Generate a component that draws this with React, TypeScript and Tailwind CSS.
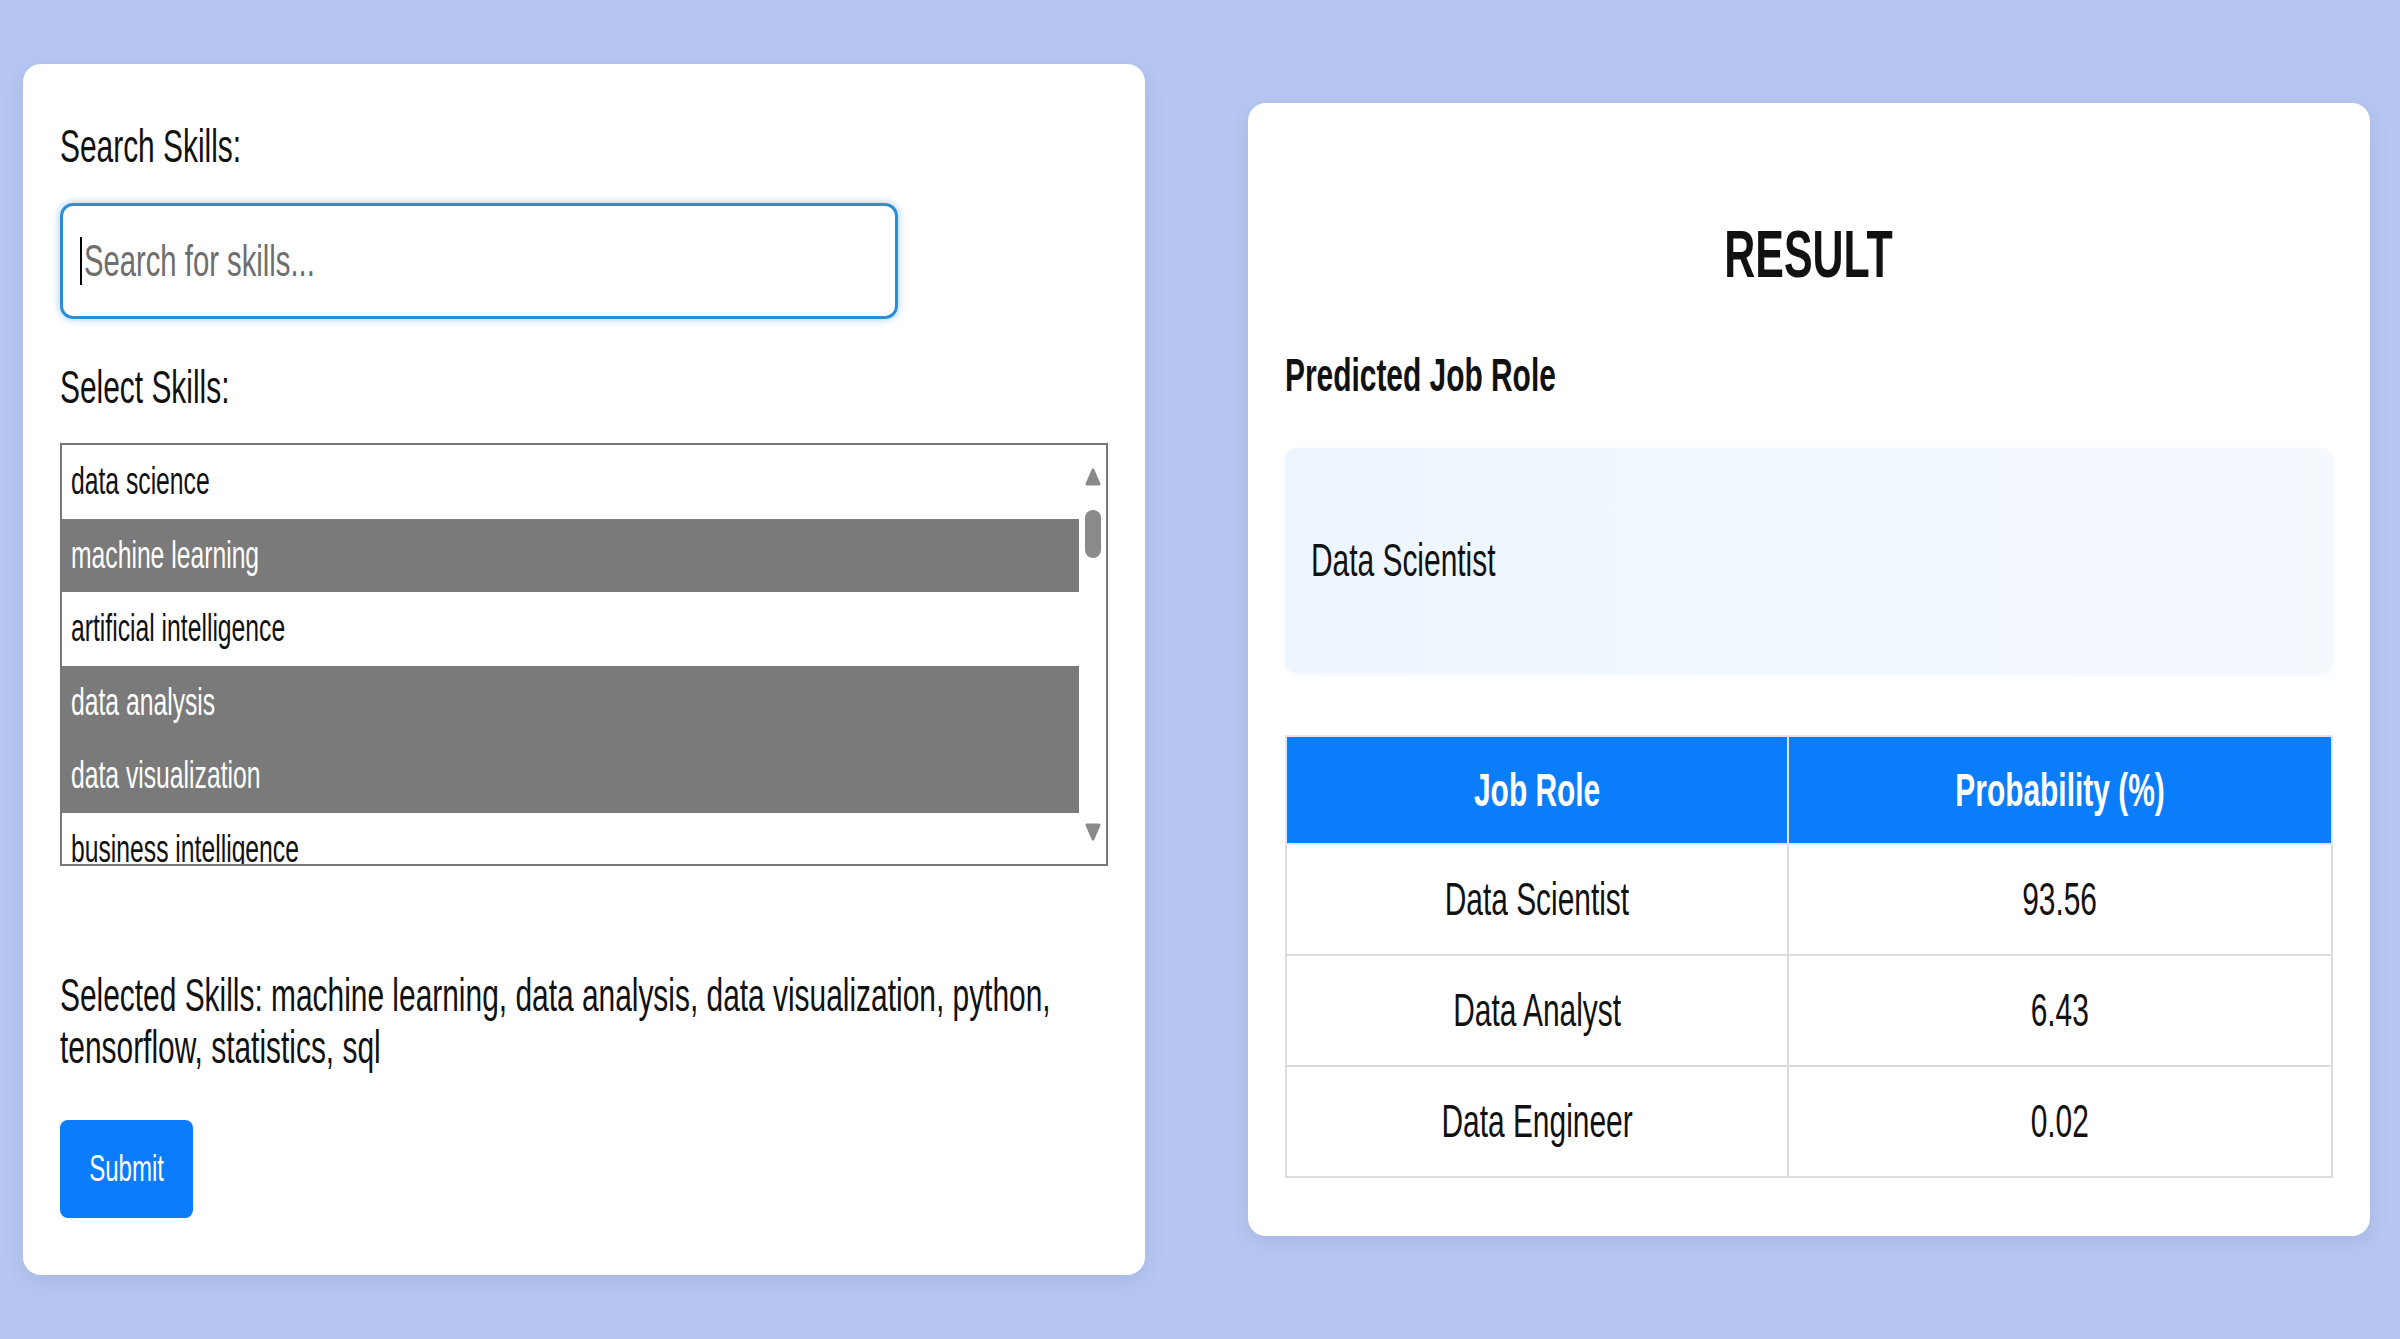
import React from "react";

function N({ children, center = false }: { children: React.ReactNode; center?: boolean }) {
  return (
    <span
      className={
        center
          ? "inline-block whitespace-nowrap origin-center scale-x-[0.65]"
          : "inline-block whitespace-nowrap origin-left scale-x-[0.65]"
      }
    >
      {children}
    </span>
  );
}

const skills = [
  { name: "data science", selected: false },
  { name: "machine learning", selected: true },
  { name: "artificial intelligence", selected: false },
  { name: "data analysis", selected: true },
  { name: "data visualization", selected: true },
  { name: "business intelligence", selected: false },
];

const results = [
  { role: "Data Scientist", prob: "93.56" },
  { role: "Data Analyst", prob: "6.43" },
  { role: "Data Engineer", prob: "0.02" },
];

export default function App() {
  return (
    <div className="flex h-[1339px] w-[2400px] items-center gap-[103px] overflow-hidden bg-[#b7c7f1] pl-[23px] font-['Liberation_Sans',Arial,sans-serif] text-[#111]">
      {/* Left card */}
      <div className="w-[1122px] shrink-0 rounded-[18px] bg-white px-[37px] pb-[57px] pt-[56px] shadow-[0_6px_20px_rgba(70,90,150,0.15)]">
        <div className="h-[53px] text-[46px] leading-[53px]">
          <N>Search Skills:</N>
        </div>
        <div className="mt-[30px] flex h-[116px] w-[80%] items-center overflow-hidden rounded-[13px] border-[3px] border-[#2b8fd8] pl-[17px] shadow-[0_0_8px_rgba(43,143,216,0.45)]">
          <div className="h-[48px] w-[2px] shrink-0 bg-black" />
          <input
            placeholder="Search for skills..."
            className="h-full w-[154%] shrink-0 origin-left scale-x-[0.65] bg-transparent pl-[3px] text-[45px] text-[#111] outline-none placeholder:text-[#6e6e6e]"
          />
        </div>
        <div className="mt-[42px] h-[53px] text-[46px] leading-[53px]">
          <N>Select Skills:</N>
        </div>
        <div className="mt-[29px] flex h-[423px] border-2 border-[#777]">
          <div className="flex flex-1 flex-col overflow-hidden">
            {skills.map((s) => (
              <div
                key={s.name}
                className={
                  s.selected
                    ? "flex h-[73.5px] shrink-0 items-center bg-[#7a7a7a] pl-[9px] text-[38px] text-white"
                    : "flex h-[73.5px] shrink-0 items-center bg-white pl-[9px] text-[38px] text-[#111]"
                }
              >
                <N>{s.name}</N>
              </div>
            ))}
          </div>
          <div className="flex w-[27px] shrink-0 flex-col items-center pb-[22px] pt-[22px]">
            <svg width="16" height="20" viewBox="0 0 16 20">
              <polygon points="8,3 14,17 2,17" fill="#8a8a8a" stroke="#8a8a8a" strokeWidth="3" strokeLinejoin="round" />
            </svg>
            <div className="mt-[23px] h-[48px] w-[16px] rounded-full bg-[#8a8a8a]" />
            <div className="flex-1" />
            <svg width="16" height="20" viewBox="0 0 16 20">
              <polygon points="2,3 14,3 8,17" fill="#8a8a8a" stroke="#8a8a8a" strokeWidth="3" strokeLinejoin="round" />
            </svg>
          </div>
        </div>
        <div className="mt-[103px] text-[46px] leading-[52px]">
          <div>
            <N>Selected Skills: machine learning, data analysis, data visualization, python,</N>
          </div>
          <div>
            <N>tensorflow, statistics, sql</N>
          </div>
        </div>
        <button className="mt-[47px] flex h-[98px] w-[133px] items-center justify-center rounded-[8px] bg-[#0a7cfc] text-[37px] text-white">
          <N center>Submit</N>
        </button>
      </div>

      {/* Right card */}
      <div className="w-[1122px] shrink-0 rounded-[18px] bg-white px-[37px] pb-[58px] pt-[113px] shadow-[0_6px_20px_rgba(70,90,150,0.15)]">
        <h1 className="h-[76px] text-center text-[66px] font-bold leading-[76px]">
          <N center>RESULT</N>
        </h1>
        <h2 className="mt-[57px] h-[53px] text-[46px] font-bold leading-[53px]">
          <N>Predicted Job Role</N>
        </h2>
        <div className="mt-[46px] flex h-[225px] items-center rounded-[12px] bg-gradient-to-r from-[#edf6fe] to-[#f4f9fe] pl-[26px] text-[46px] shadow-[0_1px_4px_rgba(120,160,210,0.12)]">
          <N>Data Scientist</N>
        </div>
        <table className="mt-[62px] w-full table-fixed border-collapse text-[46px]">
          <colgroup>
            <col className="w-[502px]" />
            <col />
          </colgroup>
          <thead>
            <tr>
              <th className="h-[108px] border-2 border-[#e2e6ec] bg-[#0a7efa] text-center font-bold text-white">
                <N center>Job Role</N>
              </th>
              <th className="h-[108px] border-2 border-[#e2e6ec] bg-[#0a7efa] text-center font-bold text-white">
                <N center>Probability (%)</N>
              </th>
            </tr>
          </thead>
          <tbody>
            {results.map((r) => (
              <tr key={r.role}>
                <td className="h-[111px] border-2 border-[#dcdcdc] text-center">
                  <N center>{r.role}</N>
                </td>
                <td className="h-[111px] border-2 border-[#dcdcdc] text-center">
                  <N center>{r.prob}</N>
                </td>
              </tr>
            ))}
          </tbody>
        </table>
      </div>
    </div>
  );
}
